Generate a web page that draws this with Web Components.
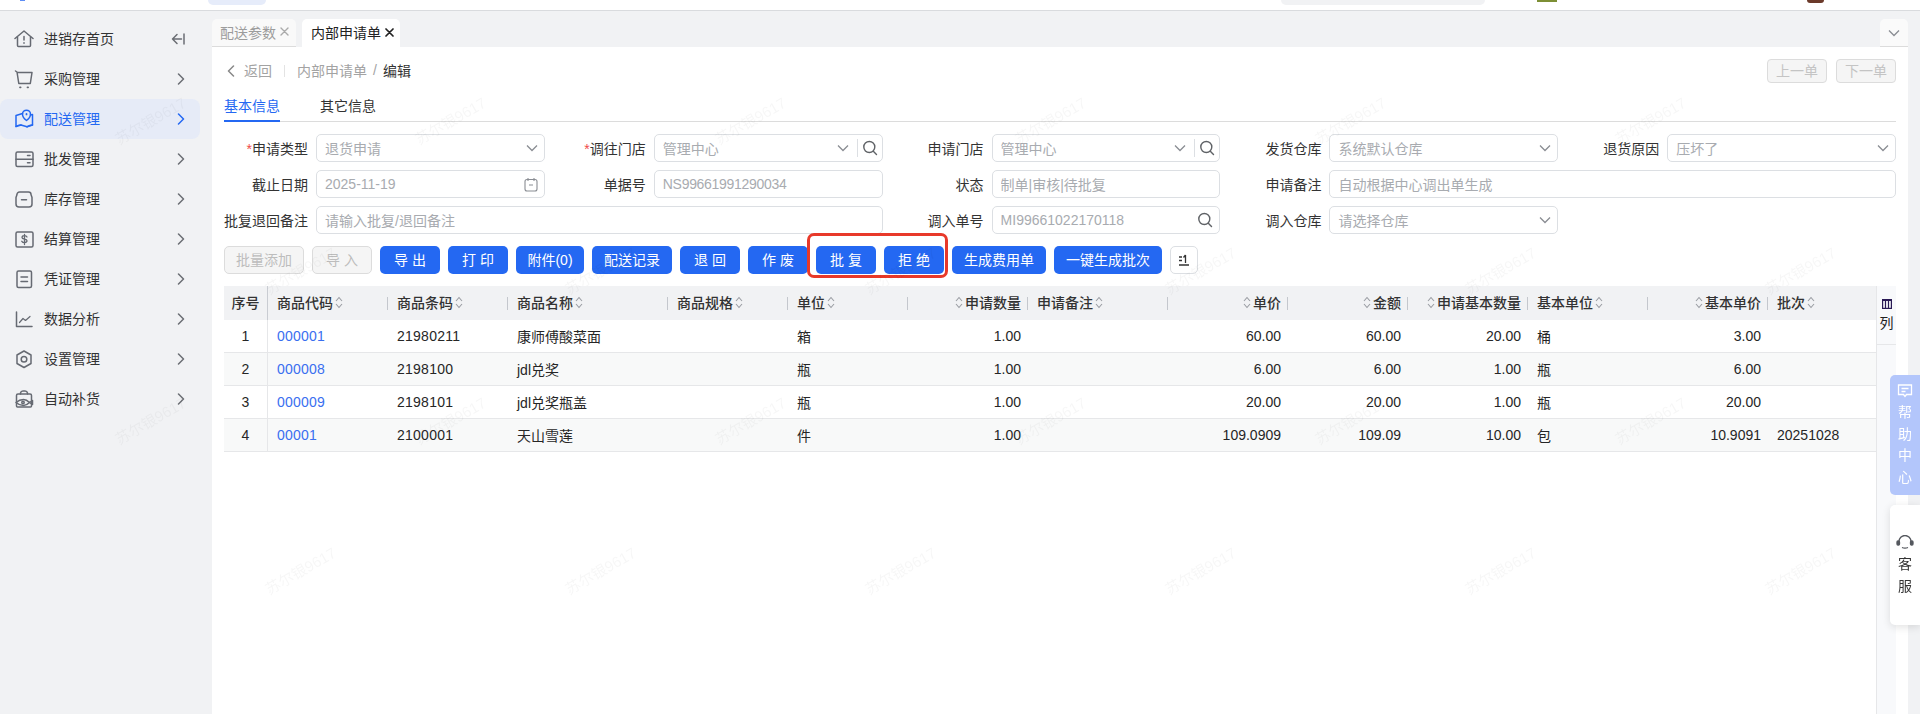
<!DOCTYPE html>
<html lang="zh"><head><meta charset="utf-8"><title>内部申请单</title>
<style>
html,body{margin:0;height:100%;overflow:hidden;background:#f1f2f4;font:14px "Liberation Sans","Noto Sans CJK SC",sans-serif;color:#333}
erp-app{height:100vh}
</style></head><body>
<erp-app></erp-app>
<script>
const FONT='"Liberation Sans","Noto Sans CJK SC",sans-serif';
const svg=(w,h,vb,body,extra='')=>`<svg width="${w}" height="${h}" viewBox="${vb}" fill="none" stroke="currentColor" stroke-width="1.5" stroke-linecap="round" stroke-linejoin="round" ${extra}>${body}</svg>`;
const ICONS={
 home:'<path d="M1 9.500 10 2l9 7.500"/><path d="M3.500 8v8.500a1 1 0 0 0 1 1h11a1 1 0 0 0 1-1V8"/><path d="M10 7.500v3.500M10 13.800v.4"/>',
 cart:'<path d="M1.500 2 3 3v0l1.800 11.500h11.500L18 3.500H3.200"/><path d="M6 18.300h.6M13.500 18.300h.6" stroke-width="1.800"/>',
 map:'<path d="M8.500 4.500 2 6.500v11l5-1.500 6 1.800 5.500-1.800V5.500L16.500 6"/><path d="M2 17.500c2-1.500 3.500-1.500 5-1.500M13 17.800c2-1.300 3.500-1.800 5.500-1.800"/><path d="M12.500 11.500s-4-3-4-6.300a4 4 0 0 1 8 0c0 3.300-4 6.300-4 6.300z"/><path d="M12.500 5v.4" stroke-width="1.800"/>',
 ws:'<rect x="2" y="3" width="17" height="14.500" rx="1.500"/><path d="M2 10.200h17M13.500 6.600h2.500M13.500 13.800h2.500"/>',
 stock:'<path d="M5.500 3h9A2.500 2.500 0 0 1 17 5.500l1 3V15a3 3 0 0 1-3 3H5a3 3 0 0 1-3-3V8.500l1-3A2.500 2.500 0 0 1 5.500 3z"/><path d="M7.500 10.800h5"/>',
 money:'<rect x="2" y="3" width="17" height="15" rx="1.500"/><path d="M13 8c-.5-1-1.500-1.300-2.500-1.300-1.300 0-2.500.7-2.500 1.800 0 2.400 5 1 5 3.300 0 1.100-1.200 1.800-2.500 1.800s-2.200-.5-2.700-1.300M10.500 5.500v10" stroke-width="1.300"/>',
 doc:'<rect x="3" y="2" width="14.500" height="16.500" rx="1.500"/><path d="M7 8h6.500M7 12.500h6.500"/>',
 chart:'<path d="M2.500 3v14.500H18"/><path d="M5.500 13.500 9 9.500l2.500 2L16 7.500" stroke-width="1.200"/>',
 gear:'<path d="M10 2l7 4v8.500l-7 4-7-4V6z"/><circle cx="10" cy="10.200" r="2.800"/>',
 bag:'<path d="M6.500 5V4a2.500 2.500 0 0 1 2.500-2h2a2.500 2.500 0 0 1 2.500 2v1"/><path d="M4 5h12a1.500 1.500 0 0 1 1.500 1.500V17a1 1 0 0 1-1 1H3.500a1 1 0 0 1-1-1V6.500A1.500 1.500 0 0 1 4 5z"/><path d="M2 13.500s3.500-3 7.500-3c2.500 0 4.500 1.500 6 3-1.500 1.500-3.500 3-6 3-4 0-7.500-3-7.500-3zM15.500 13.500l3-2v4z"/><circle cx="9" cy="13.500" r="1.200"/>'
};
const chevDown=`<svg width="12" height="8" viewBox="0 0 12 8" fill="none" stroke="#8a8d93" stroke-width="1.300"><path d="M1 1.500l5 5 5-5"/></svg>`;
const searchI=`<svg width="16" height="16" viewBox="0 0 16 16" fill="none" stroke="#5f6266" stroke-width="1.400" stroke-linecap="round"><circle cx="7.300" cy="7" r="5.500"/><path d="M11.300 11.300l3.200 3.200"/></svg>`;
const calI=`<svg width="14" height="15" viewBox="0 0 14 15" fill="none" stroke="#8a8d93" stroke-width="1.100"><rect x="1" y="2.500" width="12" height="11.500" rx="2"/><path d="M4 1v3M10 1v3M5 8h4"/></svg>`;

function define(name,html,init){
  customElements.define(name,class extends HTMLElement{
    connectedCallback(){
      if(this.shadowRoot) return;
      const r=this.attachShadow({mode:'open'});
      r.innerHTML=typeof html==='function'?html(this):html;
      if(init) init(this,r);
    }
  });
}

define('nav-item',h=>{
  const active=h.hasAttribute('active');
  const collapse=h.hasAttribute('collapse');
  return `<style>
  :host{display:flex;align-items:center;width:200px;height:40px;box-sizing:border-box;padding:0 15px 2px 14px;border-radius:8px;color:#333;font-size:14px;${active?'background:#e6ebf7;color:#2468f2;':''}}
  .i{width:20px;height:20px;margin:2px 10px 0 0;color:${active?'#2468f2':'#666a72'};flex:none}
  .c{margin-left:auto;margin-top:2px;color:${active?'#2468f2':'#6b6e74'};display:flex}
  </style>
  <span class="i">${svg(20,20,'0 0 20 20',ICONS[h.getAttribute('icon')])}</span><slot></slot>
  <span class="c">${collapse?svg(14,12,'0 0 14 12','<path d="M6 1.500 1.500 6 6 10.500M1.500 6h9M13 1v10"/>'):svg(8,12,'0 0 8 12','<path d="M1.500 1l5 5-5 5"/>')}</span>`;
});

define('side-nav',`<style>:host{display:flex;flex-direction:column;width:212px;flex:none;padding-top:8px;box-sizing:border-box}</style><slot></slot>`);

define('top-strip',`<style>
:host{display:flex;align-items:flex-start;height:10px;background:#fff;border-bottom:1px solid #d9dbde;flex:none;overflow:hidden}
i{display:block}
.a{margin-left:20px;width:5px;height:1px;background:#5d8df5}
.b{margin-left:183px;width:58px;height:5px;background:#e6ecfa;border-radius:0 0 5px 5px}
.c{margin-left:1015px;width:204px;height:5px;background:#f1f2f4;border-radius:0 0 5px 5px}
.d{margin-left:52px;width:20px;height:2px;background:#7d8f35}
.e{margin-left:250px;width:17px;height:3px;background:#6b3a2a;border-radius:0 0 9px 9px}
</style><i class="a"></i><i class="b"></i><i class="c"></i><i class="d"></i><i class="e"></i>`);

define('page-tab',h=>{
  const on=h.hasAttribute('active');
  return `<style>
  :host{display:flex;align-items:center;height:28px;box-sizing:border-box;border-radius:5px 5px 0 0;font-size:14px;gap:4px;padding-bottom:2px;${on?'background:#fff;color:#222;padding-left:9px;padding-right:6px':'background:#f9f9f9;color:#9c9c9c;border-bottom:1px solid #dcdcdc;padding-left:8px;padding-right:7px'}}
  svg{display:block}
  </style><slot></slot>${svg(9,9,'0 0 9 9','<path d="M1 1l7 7M8 1 1 8"/>',`style="color:${on?'#222':'#aaa'};stroke-width:${on?1.7:1.4}"`)}`;
});

define('tab-strip',`<style>:host{display:flex;gap:6px;height:36px;padding-top:8px;box-sizing:border-box;flex:none}
.more{margin-left:auto;width:28px;height:28px;display:flex;align-items:center;justify-content:center;background:#fafafa;border-radius:5px 5px 0 0;border-bottom:1px solid #dcdcdc;box-sizing:border-box}
</style><slot></slot><span class="more">${chevDown}</span>`);

define('crumb-bar',`<style>
:host{display:flex;align-items:center;height:24px;font-size:14px;color:#a3a3a3;flex:none}
.b{margin-left:9px;margin-right:12px;padding-bottom:2px}.s{width:1px;height:12px;background:#e3e3e3;margin-right:12px}
.sl{margin:0 6px;padding-bottom:2px}.cur{color:#333;padding-bottom:2px}.p{padding-bottom:2px}
.r{margin-left:auto;display:flex;gap:9px}
.r span{width:60px;height:24px;box-sizing:border-box;border:1px solid #dcdcdc;border-radius:4px;background:#f5f5f5;color:#c4c4c4;display:flex;align-items:center;justify-content:center;padding-bottom:2px}
svg{margin-left:3px;color:#888}
</style>${svg(8,12,'0 0 8 12','<path d="M6.500 1l-5 5 5 5"/>')}<span class="b">返回</span><span class="s"></span><span class="p">内部申请单</span><span class="sl">/</span><span class="cur">编辑</span><div class="r"><span>上一单</span><span>下一单</span></div>`);

define('sub-tabs',`<style>
:host{display:flex;gap:40px;height:39px;box-sizing:border-box;border-bottom:1px solid #dcdcdc;flex:none;position:relative}
span{display:flex;align-items:center;height:39px;padding-top:5px;box-sizing:border-box;color:#333;font-size:14px}
.on{color:#2468f2;border-bottom:2px solid #2468f2;padding-top:6px}
</style><span class="on">基本信息</span><span>其它信息</span>`);

define('form-grid',`<style>:host{display:grid;grid-template-columns:repeat(5,320.8px);column-gap:17px;row-gap:8px;margin-top:12px;flex:none}</style><slot></slot>`);

define('form-field',h=>{
  const k=h.getAttribute('kind')||'text';
  const ph=h.getAttribute('label');
  let tail='';
  if(k==='select')tail=`<b class="ic">${chevDown}</b>`;
  if(k==='ss')tail=`<b class="ic ch">${chevDown}</b><b class="dv"></b><b class="ic sr">${searchI}</b>`;
  if(k==='date')tail=`<b class="ic">${calI}</b>`;
  if(k==='search')tail=`<b class="ic">${searchI}</b>`;
  const ls=h.getAttribute('tight')!==null?'letter-spacing:-.3px;':'';
  return `<style>
  :host{display:flex;align-items:center;height:28px;${h.hasAttribute('wide')?'grid-column:span 2;':''}}
  label{width:84px;margin-right:8px;text-align:right;white-space:nowrap;color:#333;flex:none;font-size:14px}
  em{color:#f04a4a;font-style:normal}
  .box{flex:1;min-width:0;height:28px;box-sizing:border-box;border:1px solid #dcdfe3;border-radius:5px;background:#fff;display:flex;align-items:center;padding-left:8px;color:#a8abb0;font-size:14px}
  .t{flex:1;white-space:nowrap;overflow:hidden;${ls}}
  b{display:flex;font-weight:400}
  .ic{margin-right:6px;align-items:center}
  .ch{margin-right:8px}.dv{width:1px;height:18px;background:#dcdfe3}.sr{margin:0 4px 0 4px}
  </style><label>${h.hasAttribute('required')?'<em>*</em>':''}${ph}</label><div class="box"><span class="t"><slot></slot></span>${tail}</div>`;
});

define('ui-btn',h=>{
  const d=h.hasAttribute('disabled');
  return `<style>:host{display:flex;align-items:center;justify-content:center;height:28px;min-width:60px;box-sizing:border-box;padding:0 ${d?11:12}px 2px;border-radius:5px;font-size:14px;white-space:pre;
  ${d?'background:#f5f5f5;color:#bdbdbd;border:1px solid #dcdcdc;':'background:#2468f2;color:#fff;'}}</style><slot></slot>`;
});

define('icon-btn',`<style>:host{display:flex;align-items:center;justify-content:center;width:28px;height:28px;box-sizing:border-box;border:1px solid #dcdfe3;border-radius:5px;background:#fff;color:#333}</style>
<svg width="12" height="12" viewBox="0 0 12 12" fill="none" stroke="#333" stroke-width="1.300"><path d="M1 3h3M1 6.500h3M7.500 1v8M5.500 3.500 7.500 1M1 11h10"/></svg>`);

define('action-bar',`<style>:host{display:flex;gap:8px;margin-top:12px;position:relative;flex:none}
.mark{position:absolute;left:583px;top:-13px;width:141px;height:45px;box-sizing:border-box;border:3px solid #e8392a;border-radius:7px}
</style><slot></slot><div class="mark"></div>`);

const COLS=[44,120,120,160,120,120,120,140,120,120,120,120,120,108];
const HEAD=[['序号','c'],['商品代码','l'],['商品条码','l'],['商品名称','l'],['商品规格','l'],['单位','l'],['申请数量','r'],['申请备注','l'],['单价','r'],['金额','r'],['申请基本数量','r'],['基本单位','l'],['基本单价','r'],['批次','l']];
const ROWS=[
['1','000001','21980211','康师傅酸菜面','','箱','1.00','','60.00','60.00','20.00','桶','3.00',''],
['2','000008','2198100','jdl兑奖','','瓶','1.00','','6.00','6.00','1.00','瓶','6.00',''],
['3','000009','2198101','jdl兑奖瓶盖','','瓶','1.00','','20.00','20.00','1.00','瓶','20.00',''],
['4','00001','2100001','天山雪莲','','件','1.00','','109.0909','109.09','10.00','包','10.9091','20251028']];
const sortI=`<svg class="so" width="8" height="13" viewBox="0 0 8 13" fill="none" stroke="#9a9da3" stroke-width="1.100"><path d="M1 5l3-3.500L7 5M1 8l3 3.500L7 8"/></svg>`;
define('data-table',()=>`<style>
:host{display:block;flex:1;min-width:0}
.g{display:grid;grid-template-columns:${COLS.map(c=>c+'px').join(' ')};font-size:14px;color:#262626}
.h{height:34px;background:#f1f2f4;display:flex;align-items:center;padding:0 9px 2px;box-sizing:border-box;font-weight:500;position:relative;white-space:nowrap;color:#333}
.h.r{justify-content:flex-end;padding-right:7px}.h.c{justify-content:center;padding:0 0 2px;border-right:1px solid #c9ccd2}
.h::after{content:"";position:absolute;right:0;top:11px;height:13px;width:1px;background:#c4c7cd}
.h.c::after,.h.last::after{display:none}
.so{margin:0 2px;flex:none}
.d{height:33px;box-sizing:border-box;border-bottom:1px solid #e6e7e9;display:flex;align-items:center;padding:0 9px;white-space:nowrap;background:#fff}
.d.r{justify-content:flex-end;padding-right:7px}.d.c{justify-content:center;padding:0;border-right:1px solid #e6e7e9}
.d.even{background:#f8f9f9}
.d.link{color:#3a6ff0;letter-spacing:.2px}
.d.code{letter-spacing:.25px}
</style><div class="g">${HEAD.map(([t,a],i)=>`<div class="h ${a}${i==13?' last':''}">${a=='r'?sortI:''}<span>${t}</span>${a=='l'?sortI:''}</div>`).join('')}
${ROWS.map((r,ri)=>r.map((v,i)=>`<div class="d ${HEAD[i][1]}${ri%2?' even':''}${i==1?' link':''}${i==2?' code':''}">${v}</div>`).join('')).join('')}</div>`);

define('col-rail',`<style>
:host{display:block;width:20px;flex:none;background:#f8f9fb;box-sizing:border-box;border-left:1px solid #e6e7e9}
.t{height:59px;box-sizing:border-box;padding-top:13px;border-bottom:1px solid #e6e7e9;display:flex;flex-direction:column;align-items:center;font-size:14px;color:#222;gap:6px;line-height:16px}
svg{display:block}
</style><div class="t"><svg width="10" height="10" viewBox="0 0 10 10" fill="none" stroke="#2a1a55" stroke-width="1.200"><rect x=".6" y=".6" width="8.800" height="8.800"/><path d="M3.500 1v8M6.500 1v8M1 1.500h8"/></svg><span>列</span></div>`);

define('help-rail',`<style>
:host{position:fixed;right:0;top:375px;width:30px;display:flex;flex-direction:column;gap:10px;font-size:14px}
.h{height:120px;background:#b3c6fb;color:#fff;border-radius:5px 0 0 5px;display:flex;flex-direction:column;align-items:center;box-sizing:border-box;padding-top:9px;line-height:21.500px}
.h svg{margin-bottom:4px}
.k{height:120px;background:#fff;border-radius:5px 0 0 5px;box-shadow:0 2px 8px rgba(0,0,0,.12);display:flex;flex-direction:column;align-items:center;box-sizing:border-box;padding-top:30px;line-height:21.500px;color:#333}
.k svg{margin-bottom:4px}
</style><div class="h"><svg width="16" height="14" viewBox="0 0 16 14" fill="none" stroke="#fff" stroke-width="1.300"><path d="M1.500 1h13v9.500H9.500L8 12.500 6.500 10.500h-5z"/><path d="M4.500 4.500h7M4.500 7.500h4"/></svg><span>帮</span><span>助</span><span>中</span><span>心</span></div>
<div class="k"><svg width="18" height="15" viewBox="0 0 18 15" fill="none" stroke="#55585e" stroke-width="1.300"><path d="M3 8V6.500a6 6 0 0 1 12 0V8"/><rect x="1" y="6" width="2.500" height="4" rx="1" fill="#55585e"/><rect x="14.500" y="6" width="2.500" height="4" rx="1" fill="#55585e"/><path d="M6 12.500c2 .8 4 .8 6 0"/></svg><span>客</span><span>服</span></div>`);

define('water-mark',()=>{
  const pts=[];
  for(let j=0;j<2;j++)for(let k=0;k<6;k++)pts.push([150+300*k,120+300*j]);
  for(let j=0;j<2;j++)for(let k=1;k<7;k++)pts.push([300*k,270+300*j]);
  return `<style>:host{position:fixed;inset:0;pointer-events:none;overflow:hidden;z-index:5}
  span{position:absolute;transform:translate(-50%,-50%) rotate(-30deg);font-size:15px;color:rgba(0,0,0,.035);white-space:nowrap}</style>`+
  pts.filter(p=>p[0]<1860).map(([x,y])=>`<span style="left:${x}px;top:${y}px">苏尔银9617</span>`).join('');
});

define('erp-app',`<style>
:host{display:flex;flex-direction:column;font:14px ${FONT};color:#333}
.body{flex:1;display:flex;min-height:0}
.main{flex:1;min-width:0;display:flex;flex-direction:column;margin-right:12px}
.page{flex:1;min-height:0;background:#fff;padding:12px 12px 0;display:flex;flex-direction:column}
.tbl{flex:1;min-height:0;display:flex;margin-top:12px}
</style>
<top-strip></top-strip>
<div class="body">
 <side-nav>
  <nav-item icon="home" collapse>进销存首页</nav-item>
  <nav-item icon="cart">采购管理</nav-item>
  <nav-item icon="map" active>配送管理</nav-item>
  <nav-item icon="ws">批发管理</nav-item>
  <nav-item icon="stock">库存管理</nav-item>
  <nav-item icon="money">结算管理</nav-item>
  <nav-item icon="doc">凭证管理</nav-item>
  <nav-item icon="chart">数据分析</nav-item>
  <nav-item icon="gear">设置管理</nav-item>
  <nav-item icon="bag">自动补货</nav-item>
 </side-nav>
 <div class="main">
  <tab-strip><page-tab>配送参数</page-tab><page-tab active>内部申请单</page-tab></tab-strip>
  <div class="page">
   <crumb-bar></crumb-bar>
   <sub-tabs></sub-tabs>
   <form-grid>
    <form-field label="申请类型" required kind="select">退货申请</form-field>
    <form-field label="调往门店" required kind="ss">管理中心</form-field>
    <form-field label="申请门店" kind="ss">管理中心</form-field>
    <form-field label="发货仓库" kind="select">系统默认仓库</form-field>
    <form-field label="退货原因" kind="select">压坏了</form-field>
    <form-field label="截止日期" kind="date">2025-11-19</form-field>
    <form-field label="单据号" tight>NS99661991290034</form-field>
    <form-field label="状态">制单|审核|待批复</form-field>
    <form-field label="申请备注" wide>自动根据中心调出单生成</form-field>
    <form-field label="批复退回备注" wide>请输入批复/退回备注</form-field>
    <form-field label="调入单号" kind="search">MI99661022170118</form-field>
    <form-field label="调入仓库" kind="select">请选择仓库</form-field>
   </form-grid>
   <action-bar>
    <ui-btn disabled>批量添加</ui-btn><ui-btn disabled>导 入</ui-btn><ui-btn>导 出</ui-btn><ui-btn>打 印</ui-btn><ui-btn style="width:68px;padding-left:0;padding-right:0">附件(0)</ui-btn><ui-btn>配送记录</ui-btn><ui-btn>退 回</ui-btn><ui-btn>作 废</ui-btn><ui-btn>批 复</ui-btn><ui-btn>拒 绝</ui-btn><ui-btn>生成费用单</ui-btn><ui-btn>一键生成批次</ui-btn><icon-btn></icon-btn>
   </action-bar>
   <div class="tbl"><data-table></data-table><col-rail></col-rail></div>
  </div>
 </div>
</div>
<help-rail></help-rail>
<water-mark></water-mark>`);
</script>
</body></html>
